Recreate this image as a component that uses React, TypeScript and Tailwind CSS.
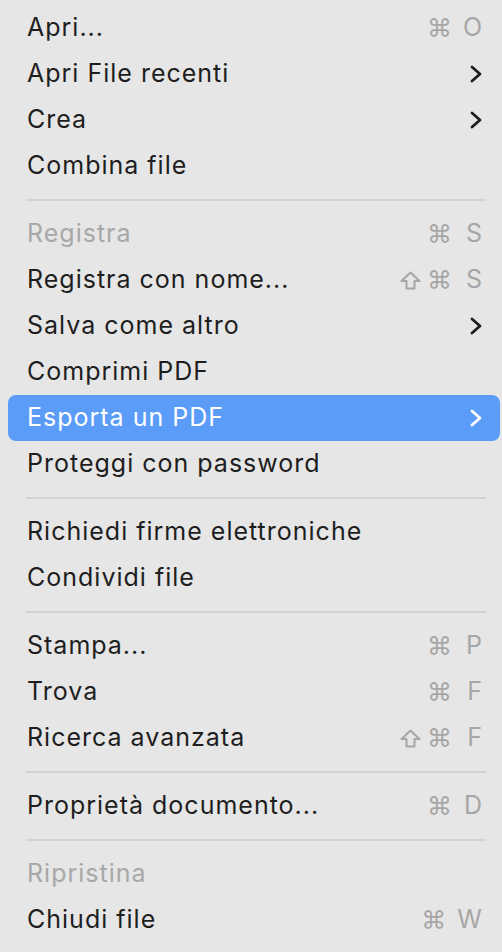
type Item =
  | { kind: 'sep' }
  | { kind: 'item'; label: string; keys?: string; shift?: boolean; sub?: boolean; disabled?: boolean; active?: boolean };

const items: Item[] = [
  { kind: 'item', label: 'Apri...', keys: 'O' },
  { kind: 'item', label: 'Apri File recenti', sub: true },
  { kind: 'item', label: 'Crea', sub: true },
  { kind: 'item', label: 'Combina file' },
  { kind: 'sep' },
  { kind: 'item', label: 'Registra', keys: 'S', disabled: true },
  { kind: 'item', label: 'Registra con nome...', keys: 'S', shift: true },
  { kind: 'item', label: 'Salva come altro', sub: true },
  { kind: 'item', label: 'Comprimi PDF' },
  { kind: 'item', label: 'Esporta un PDF', sub: true, active: true },
  { kind: 'item', label: 'Proteggi con password' },
  { kind: 'sep' },
  { kind: 'item', label: 'Richiedi firme elettroniche' },
  { kind: 'item', label: 'Condividi file' },
  { kind: 'sep' },
  { kind: 'item', label: 'Stampa...', keys: 'P' },
  { kind: 'item', label: 'Trova', keys: 'F' },
  { kind: 'item', label: 'Ricerca avanzata', keys: 'F', shift: true },
  { kind: 'sep' },
  { kind: 'item', label: 'Proprietà documento...', keys: 'D' },
  { kind: 'sep' },
  { kind: 'item', label: 'Ripristina', disabled: true },
  { kind: 'item', label: 'Chiudi file', keys: 'W' },
];

function ShiftIcon() {
  return (
    <svg width="21" height="19" viewBox="0 0 21 19" fill="none" stroke="currentColor" strokeWidth="2" strokeLinejoin="round">
      <path d="M10.5 1.5 L19.5 10 H14.5 V17.5 H6.5 V10 H1.5 Z" />
    </svg>
  );
}

function Chevron() {
  return (
    <svg width="14" height="20" viewBox="0 0 14 20" fill="none" stroke="currentColor" strokeWidth="2.8" strokeLinecap="round" strokeLinejoin="round">
      <path d="M3 3 L11 10 L3 17" />
    </svg>
  );
}

function Shortcut({ letter, shift }: { letter: string; shift?: boolean }) {
  return (
    <span className="flex items-center text-[#a6a6a6]">
      {shift ? (
        <span className="mr-[6px]">
          <ShiftIcon />
        </span>
      ) : null}
      <span className="font-['DejaVu_Sans',sans-serif] text-[25px] leading-none">⌘</span>
      <span className="ml-[10px] min-w-[20px] text-right">{letter}</span>
    </span>
  );
}

export default function App() {
  return (
    <div className="h-[952px] w-[502px] overflow-hidden bg-[#e6e6e6] pt-[5px] font-['Inter',sans-serif] text-[25px] tracking-[1px] text-[#1e1e1e]">
      {items.map((item, i) =>
        item.kind === 'sep' ? (
          <div key={i} className="flex h-[22px] items-center pl-[26px] pr-[16px]">
            <div className="h-[2px] w-full bg-[#d2d2d2]" />
          </div>
        ) : (
          <div
            key={i}
            className={`ml-[8px] mr-[2px] flex h-[46px] items-center justify-between rounded-[8px] pl-[19px] pr-[17px] ${
              item.active ? 'bg-[#5a9cf7] text-white' : ''
            } ${item.disabled ? 'text-[#a8a8a8]' : ''}`}
          >
            <span>{item.label}</span>
            {item.keys ? <Shortcut letter={item.keys} shift={item.shift} /> : null}
            {item.sub ? <Chevron /> : null}
          </div>
        )
      )}
    </div>
  );
}
